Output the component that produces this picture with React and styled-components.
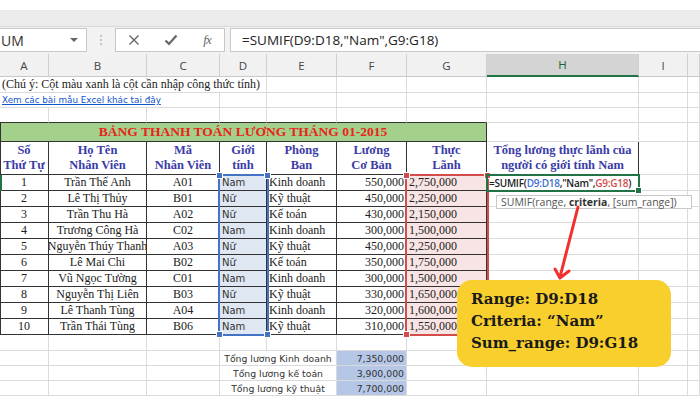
import styled, { createGlobalStyle } from 'styled-components';

const GlobalStyle = createGlobalStyle`
  html, body { margin: 0; padding: 0; background: #fff; }
  body { width: 700px; height: 420px; overflow: hidden; font-family: "Liberation Serif", serif; }
`;

const SERIF = '"Liberation Serif", "Times New Roman", serif';
const TAHOMA = '"DejaVu Sans", Verdana, sans-serif';
const UI = '"Open Sans", "Noto Sans", sans-serif';

const Page = styled.div`
  position: relative;
  width: 700px;
  height: 420px;
  overflow: hidden;
`;

const TopStrip = styled.div`
  height: 10px;
  background: #fff;
`;

const RibbonEdge = styled.div`
  height: 16px;
  background: #ebebeb;
  border-bottom: 1px solid #d8d8d8;
`;

const FormulaBar = styled.div`
  height: 27px;
  box-sizing: border-box;
  padding-top: 1px;
  background: #f2f2f2;
  display: flex;
  align-items: flex-start;
`;

const NameBox = styled.div`
  width: 89px;
  height: 24px;
  margin-left: -2px;
  box-sizing: border-box;
  border: 1px solid #c8c8c8;
  background: #fff;
  display: flex;
  align-items: center;
  justify-content: space-between;
  padding: 0 8px 0 2px;
  font-family: ${UI};
  font-size: 14px;
  color: #333;
`;

const Caret = styled.span`
  width: 0;
  height: 0;
  border-left: 4px solid transparent;
  border-right: 4px solid transparent;
  border-top: 4px solid #666;
`;

const Grip = styled.div`
  width: 28px;
  height: 24px;
  display: flex;
  flex-direction: column;
  align-items: center;
  justify-content: center;
  gap: 2px;

  span {
    width: 2px;
    height: 2px;
    background: #c4c4c4;
  }
`;

const FxBox = styled.div`
  width: 110px;
  height: 24px;
  box-sizing: border-box;
  border: 1px solid #c8c8c8;
  background: #fff;
  display: grid;
  grid-template-columns: 36px 38px 1fr;
  align-items: center;
  justify-items: center;
`;

const FxLabel = styled.span`
  font-family: ${SERIF};
  font-style: italic;
  font-size: 13px;
  color: #666;
  letter-spacing: -1px;
`;

const FormulaInput = styled.div`
  flex: 1;
  margin-left: 5px;
  margin-right: -2px;
  height: 24px;
  box-sizing: border-box;
  border: 1px solid #c8c8c8;
  background: #fff;
  padding-left: 11px;
  font-family: ${UI};
  font-size: 13.5px;
  line-height: 22px;
  color: #222;
`;

const Sheet = styled.div`
  position: relative;
  display: grid;
  grid-template-columns: 49px 98px 73px 47px 70px 70px 80px 152px 49px 12px;
  grid-template-rows: 23px 16px 15px 15px 19px 33px repeat(10, 16px) 16px 15px 15px 15px;
`;

const ColHead = styled.div`
  box-sizing: border-box;
  background: ${(p) => (p.$active ? '#d4d4d4' : '#f1f1f1')};
  border-right: 1px solid #cfcfcf;
  border-bottom: ${(p) => (p.$active ? '2px solid #217346' : '1px solid #c8c8c8')};
  display: flex;
  align-items: center;
  justify-content: center;
  font-family: ${UI};
  font-size: 11.5px;
  color: ${(p) => (p.$active ? '#1f5c3a' : '#444')};
`;

const Cell = styled.div`
  grid-column: span ${(p) => p.$span || 1};
  box-sizing: border-box;
  min-width: 0;
  overflow: hidden;
  white-space: nowrap;
  display: flex;
  align-items: center;
  justify-content: ${(p) => p.$align || 'flex-start'};
  padding: 0 2px;
  background: ${(p) => p.$bg || 'transparent'};
  border-right: 1px solid ${(p) => (p.$dark || p.$darkRight ? '#333' : '#dadada')};
  border-bottom: 1px solid ${(p) => (p.$dark || p.$darkBottom ? '#333' : '#dadada')};
  box-shadow: ${(p) => (p.$first ? 'inset 1px 0 0 #333' : 'none')};
  font-family: ${(p) => (p.$sans ? TAHOMA : SERIF)};
  font-size: ${(p) => p.$size || 12}px;
  font-weight: ${(p) => (p.$bold ? 700 : 400)};
  color: ${(p) => p.$color || '#222'};
`;

const HeadText = styled.div`
  text-align: center;
  line-height: 15px;
  white-space: pre;
`;

const Link = styled.span`
  font-family: ${TAHOMA};
  font-size: 8.8px;
  color: #1155cc;
  text-decoration: underline;
`;

const Formula = styled.span`
  font-family: ${UI};
  font-size: 10px;
  font-weight: 600;
  color: #222;
  letter-spacing: -0.25px;

  .d { color: #3f6fd0; }
  .g { color: #cf4c4c; }
`;

const Range = styled.div`
  position: absolute;
  left: ${(p) => p.$x}px;
  top: ${(p) => p.$y}px;
  width: ${(p) => p.$w}px;
  height: ${(p) => p.$h}px;
  box-sizing: border-box;
  border: 2px solid ${(p) => p.$color};
  pointer-events: none;
`;

const Handle = styled.span`
  position: absolute;
  width: 5px;
  height: 5px;
  background: ${(p) => p.$color};
  border: 1px solid #fff;
  left: ${(p) => (p.$r ? 'auto' : '-4px')};
  right: ${(p) => (p.$r ? '-4px' : 'auto')};
  top: ${(p) => (p.$b ? 'auto' : '-4px')};
  bottom: ${(p) => (p.$b ? '-4px' : 'auto')};
`;

const Tip = styled.div`
  position: absolute;
  left: 496px;
  top: 141px;
  width: 196px;
  height: 14px;
  box-sizing: border-box;
  border: 1px solid #c9c9c9;
  background: #fff;
  padding-left: 4px;
  font-family: ${UI};
  font-size: 10.5px;
  line-height: 12px;
  color: #555;

  b { color: #333; font-weight: 700; }
`;

const Arrow = styled.svg`
  position: absolute;
  left: 540px;
  top: 200px;
`;

const Callout = styled.div`
  position: absolute;
  left: 457px;
  top: 280px;
  width: 214px;
  height: 87px;
  box-sizing: border-box;
  border-radius: 15px;
  background: #f8cf2d;
  padding: 8px 0 0 14px;
  font-family: "DejaVu Serif", serif;
  font-weight: 700;
  font-size: 15px;
  line-height: 22px;
  color: #1a1a1a;
`;

const RowMark = styled.div`
  position: absolute;
  left: 0;
  top: 121px;
  width: 2px;
  height: 16px;
  background: #217346;
`;

const COLS = ['A', 'B', 'C', 'D', 'E', 'F', 'G', 'H', 'I', ''];

const HEADERS = ['Số\nThứ Tự', 'Họ Tên\nNhân Viên', 'Mã\nNhân Viên', 'Giới\ntính', 'Phòng\nBan', 'Lương\nCơ Bản', 'Thực\nLãnh'];

const ROWS = [
  [1, 'Trần Thế Anh', 'A01', 'Nam', 'Kinh doanh', '550,000', '2,750,000'],
  [2, 'Lê Thị Thủy', 'B01', 'Nữ', 'Kỹ thuật', '450,000', '2,250,000'],
  [3, 'Trần Thu Hà', 'A02', 'Nữ', 'Kế toán', '430,000', '2,150,000'],
  [4, 'Trương Công Hà', 'C02', 'Nam', 'Kinh doanh', '300,000', '1,500,000'],
  [5, 'Nguyễn Thúy Thanh', 'A03', 'Nữ', 'Kỹ thuật', '450,000', '2,250,000'],
  [6, 'Lê Mai Chi', 'B02', 'Nữ', 'Kế toán', '350,000', '1,750,000'],
  [7, 'Vũ Ngọc Tường', 'C01', 'Nam', 'Kinh doanh', '300,000', '1,500,000'],
  [8, 'Nguyễn Thị Liên', 'B03', 'Nữ', 'Kỹ thuật', '330,000', '1,650,000'],
  [9, 'Lê Thanh Tùng', 'A04', 'Nam', 'Kinh doanh', '320,000', '1,600,000'],
  [10, 'Trần Thái Tùng', 'B06', 'Nam', 'Kỹ thuật', '310,000', '1,550,000'],
];

const SUMS = [
  ['Tổng lương Kinh doanh', '7,350,000'],
  ['Tổng lương kế toán', '3,900,000'],
  ['Tổng lương kỹ thuật', '7,700,000'],
];

const HEAD_BLUE = '#3b3ba8';

function Blanks({ n }) {
  return Array.from({ length: n }, (_, i) => <Cell key={i} />);
}

function Corners({ color, only }) {
  const all = [[0, 0], [1, 0], [0, 1], [1, 1]];
  return (only || all).map(([r, b]) => <Handle key={`${r}${b}`} $color={color} $r={r} $b={b} />);
}

export default function App() {
  return (
    <Page>
      <GlobalStyle />
      <TopStrip />
      <RibbonEdge />
      <FormulaBar>
        <NameBox>
          UM
          <Caret />
        </NameBox>
        <Grip>
          <span />
          <span />
          <span />
        </Grip>
        <FxBox>
          <svg width="12" height="12" viewBox="0 0 12 12">
            <path d="M1.5 1.5 L10.5 10.5 M10.5 1.5 L1.5 10.5" stroke="#666" strokeWidth="1.4" />
          </svg>
          <svg width="14" height="12" viewBox="0 0 14 12">
            <path d="M1.5 6.5 L5 10 L12.5 1.5" stroke="#666" strokeWidth="2.2" fill="none" />
          </svg>
          <FxLabel>fx</FxLabel>
        </FxBox>
        <FormulaInput>=SUMIF(D9:D18,"Nam",G9:G18)</FormulaInput>
      </FormulaBar>

      <Sheet>
        {COLS.map((c, i) => (
          <ColHead key={i} $active={c === 'H'}>{c}</ColHead>
        ))}

        <Cell $span={4} $size={12}>(Chú ý: Cột màu xanh là cột cần nhập công thức tính)</Cell>
        <Blanks n={6} />

        <Cell $span={3}><Link>Xem các bài mẫu Excel khác tai đây</Link></Cell>
        <Blanks n={7} />

        {Array.from({ length: 7 }, (_, i) => <Cell key={i} $darkBottom />)}
        <Blanks n={3} />

        <Cell $span={7} $dark $first $bg="#a3d08a" $align="center" $bold $size={13.5} $color="#e8241c">
          BẢNG THANH TOÁN LƯƠNG THÁNG 01-2015
        </Cell>
        <Blanks n={3} />

        {HEADERS.map((h, i) => (
          <Cell key={h} $dark $first={i === 0} $align="center" $bold $size={12.5} $color={HEAD_BLUE}>
            <HeadText>{h}</HeadText>
          </Cell>
        ))}
        <Cell $darkRight $align="center" $bold $size={12.5} $color={HEAD_BLUE}>
          <HeadText>{'Tổng lương thực lãnh của\nngười có giới tính Nam'}</HeadText>
        </Cell>
        <Blanks n={2} />

        {ROWS.map((r, ri) => [
          <Cell key={`a${ri}`} $dark $first $align="center">{r[0]}</Cell>,
          <Cell key={`b${ri}`} $dark $align="center">{r[1]}</Cell>,
          <Cell key={`c${ri}`} $dark $align="center">{r[2]}</Cell>,
          <Cell key={`d${ri}`} $dark $sans $size={10} $bg="#dfe7f3" $color="#333">{r[3]}</Cell>,
          <Cell key={`e${ri}`} $dark>{r[4]}</Cell>,
          <Cell key={`f${ri}`} $dark $align="flex-end">{r[5]}</Cell>,
          <Cell key={`g${ri}`} $dark $bg="#f8e4e4">{r[6]}</Cell>,
          <Cell key={`h${ri}`}>
            {ri === 0 && (
              <Formula>
                =SUMIF(<span className="d">D9:D18</span>,"Nam",<span className="g">G9:G18</span>)
              </Formula>
            )}
          </Cell>,
          <Cell key={`i${ri}`} />,
          <Cell key={`j${ri}`} />,
        ])}

        <Blanks n={10} />

        {SUMS.map(([label, value]) => [
          <Blanks key={`x${label}`} n={3} />,
          <Cell key={`l${label}`} $span={2} $align="center" $sans $size={9.3} $color="#333">{label}</Cell>,
          <Cell key={`v${label}`} $align="flex-end" $sans $size={9.3} $bg="#b5c6e6" $color="#333">{value}</Cell>,
          <Blanks key={`y${label}`} n={4} />,
        ])}

        <RowMark />
        <Range $x={218} $y={120} $w={51} $h={162} $color="#4472c4">
          <Corners color="#4472c4" />
        </Range>
        <Range $x={405} $y={120} $w={84} $h={162} $color="#d24c4c">
          <Corners color="#d24c4c" />
        </Range>
        <Range $x={486} $y={120} $w={154} $h={18} $color="#217346">
          <Corners color="#217346" only={[[1, 1]]} />
        </Range>
        <Tip>
          SUMIF(range, <b>criteria</b>, [sum_range])
        </Tip>
      </Sheet>

      <Arrow width="50" height="84" viewBox="0 0 50 84">
        <path d="M38 7 L20 77 M15 69 L20 78 L29 71" stroke="#f2302f" strokeWidth="3" fill="none" strokeLinecap="round" strokeLinejoin="round" />
      </Arrow>

      <Callout>
        <div>Range: D9:D18</div>
        <div>Criteria: “Nam”</div>
        <div>Sum_range: D9:G18</div>
      </Callout>
    </Page>
  );
}
